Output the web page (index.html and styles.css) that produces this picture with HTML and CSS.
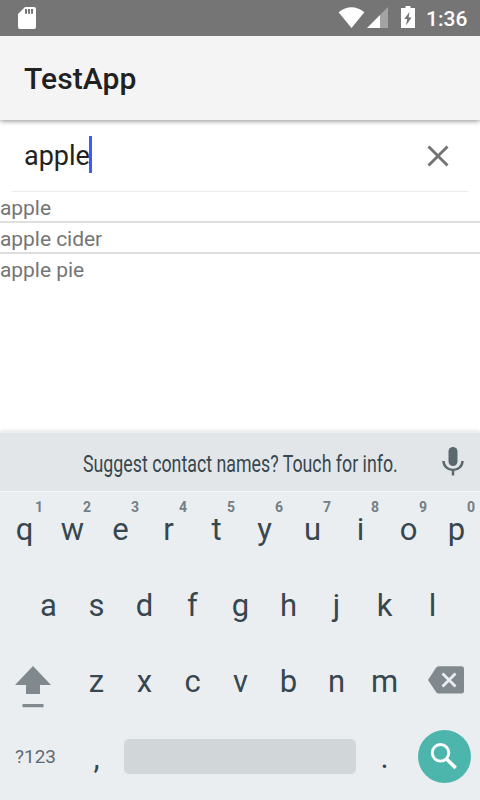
FILE: index.html
```html
<!DOCTYPE html>
<html lang="en">
<head>
<meta charset="utf-8">
<title>TestApp</title>
<link rel="stylesheet" href="styles.css">
</head>
<body>
<div class="screen">
  <header class="status">
    <svg class="sd" width="18" height="22" viewBox="0 0 18 22"><path fill="#fff" fill-rule="evenodd" d="M7 0H16Q18 0 18 2V20Q18 22 16 22H2Q0 22 0 20V7ZM7 2V6.700H9V2ZM10 2V6.700H12V2ZM13 2V6.700H15V2Z"/></svg>
    <svg class="wifi" width="28" height="22" viewBox="0 0 28 22"><path fill="#fff" d="M.6 5.200Q13.500-4.600 26.400 5.200L13.500 21Z"/></svg>
    <svg class="cell" width="21" height="21" viewBox="0 0 21 21"><path fill="#a3a3a3" d="M21 0V21H13V8Z"/><path fill="#fff" d="M13 8V21H0Z"/></svg>
    <svg class="battery" width="14" height="22" viewBox="0 0 14 22"><path fill="#fff" fill-rule="evenodd" d="M4.500 0H9.500V2H14V22H0V2H4.500ZM8.500 6L3.200 13H6.200L5 19.500L10.600 11.500H7.700Z"/></svg>
    <span class="clock">1:36</span>
  </header>
  <div class="appbar">TestApp</div>
  <main class="content">
    <div class="search">
      <span class="query">apple</span><span class="caret"></span>
      <svg class="clear" width="22" height="22" viewBox="0 0 22 22"><path stroke="#737373" stroke-width="2.900" d="M1.500 1.500L20.500 20.500M20.500 1.500L1.500 20.500"/></svg>
    </div>
    <ul class="results">
      <li>apple</li>
      <li>apple cider</li>
      <li>apple pie</li>
    </ul>
  </main>
  <section class="keyboard">
    <div class="strip">
      <span class="tip">Suggest contact names? Touch for info.</span>
      <svg class="mic" width="22" height="30" viewBox="0 0 22 30"><rect x="6.500" y="0" width="9" height="19" rx="4.500" fill="#5b696f"/><path d="M1.500 14A9.500 9 0 0 0 20.500 14M11 23V28.500" fill="none" stroke="#5b696f" stroke-width="2.500"/></svg>
    </div>
    <div class="row">
      <span class="key">q<b>1</b></span><span class="key">w<b>2</b></span><span class="key">e<b>3</b></span><span class="key">r<b>4</b></span><span class="key">t<b>5</b></span><span class="key">y<b>6</b></span><span class="key">u<b>7</b></span><span class="key">i<b>8</b></span><span class="key">o<b>9</b></span><span class="key">p<b>0</b></span>
    </div>
    <div class="row middle">
      <span class="key">a</span><span class="key">s</span><span class="key">d</span><span class="key">f</span><span class="key">g</span><span class="key">h</span><span class="key">j</span><span class="key">k</span><span class="key">l</span>
    </div>
    <div class="row">
      <span class="wide shift"><svg width="36" height="42" viewBox="0 0 36 42"><path fill="#808a8e" d="M18 0L36 19H25V28H11V19H0ZM7.500 38H28.500V41.300H7.500Z"/></svg></span>
      <span class="key">z</span><span class="key">x</span><span class="key">c</span><span class="key">v</span><span class="key">b</span><span class="key">n</span><span class="key">m</span>
      <span class="wide delete"><svg width="36" height="28" viewBox="0 0 36 28"><path fill="#808a8e" d="M10.500 .3H33.500Q36 .3 36 2.800V25Q36 27.500 33.500 27.500H10.500Q9 27.500 8 26L0 13.900L8 1.800Q9 .3 10.500 .3Z"/><path stroke="#ebeef1" stroke-width="2.800" d="M14.500 7.500L27.500 20.500M27.500 7.500L14.500 20.500"/></svg></span>
    </div>
    <div class="row">
      <span class="wide symbols">?123</span>
      <span class="key">,</span>
      <span class="space"></span>
      <span class="key period">.</span>
      <span class="go"><svg width="53" height="53" viewBox="0 0 53 53"><circle cx="26.500" cy="26.500" r="26.500" fill="#4db6ac"/><circle cx="22.500" cy="22.800" r="8.300" fill="none" stroke="#fff" stroke-width="2.900"/><path d="M28.800 29.200L37.700 38" stroke="#fff" stroke-width="3.600"/></svg></span>
    </div>
  </section>
</div>
</body>
</html>
```

FILE: styles.css
```css
* { box-sizing: border-box; }
body { margin: 0; font-family: Roboto, sans-serif; }
.screen { width: 480px; height: 800px; display: flex; flex-direction: column; background: #fff; overflow: hidden; }
.status { height: 36px; flex: none; display: flex; background: #757575; padding-left: 18px; padding-top: 7px; position: relative; z-index: 1; }
.status svg { flex: none; }
.wifi { margin-left: 302px; }
.cell { margin-left: 1px; }
.battery { margin-left: 13px; margin-top: -1px; }
.clock { margin-left: 11px; color: #fff; font-size: 21px; font-weight: 500; line-height: 24px; }
.appbar { height: 84px; flex: none; padding-left: 24px; background: #f4f4f4; color: #212121; font-size: 30px; font-weight: 500; letter-spacing: .1px; line-height: 85px; box-shadow: 0 1px 5px rgba(0,0,0,.45); }
.content { flex: 1; }
.search { height: 72px; margin: 0 12px; padding: 0 19px 0 12px; display: flex; align-items: center; border-bottom: 1px solid #ebebeb; }
.query { font-size: 27px; color: #212121; line-height: 70px; }
.caret { width: 3px; height: 37px; margin: -2px 0 0 -1px; background: #3d5afe; }
.clear { margin: 1px 0 0 auto; }
.results { margin: 0; padding: 0; list-style: none; }
.results li { height: 31px; border-bottom: 2px solid #dedede; color: #757575; font-size: 21px; letter-spacing: -.05px; line-height: 32px; }
.results li:last-child { border: 0; }
.keyboard { height: 368px; flex: none; background: #ebeef1; color: #37474f; box-shadow: 0 -1px 4px rgba(0,0,0,.12); }
.strip { height: 60px; display: flex; align-items: center; padding: 0 16px 0 83px; background: #e3e6e9; border-top: 1px solid #eceff1; border-bottom: 1px solid #f5f7f8; }
.tip { font-size: 24px; white-space: nowrap; width: 315px; line-height: 60px; margin-top: 4px; transform: scaleX(.741); transform-origin: left; }
.mic { margin-left: auto; flex: none; }
.row { height: 76px; display: flex; }
.middle { padding-left: 24px; }
.key { width: 48px; flex: none; position: relative; padding-left: 1px; text-align: center; font-size: 31px; line-height: 75px; }
.key b { position: absolute; left: 34px; top: 6px; width: 10px; font-size: 14px; line-height: 18px; color: #737f84; }
.wide { width: 72px; flex: none; }
.shift { padding: 22px 0 0 15px; line-height: 0; }
.delete { padding: 22px 0 0 20px; line-height: 0; }
.symbols { padding-left: 15px; font-size: 19px; line-height: 74px; color: #5f6c72; }
.space { width: 232px; height: 35px; margin: 19px 0 0 4px; border-radius: 5px; background: #d1d6d9; }
.period { margin-left: 4px; }
.go { margin: 10px 0 0 10px; line-height: 0; }
```
